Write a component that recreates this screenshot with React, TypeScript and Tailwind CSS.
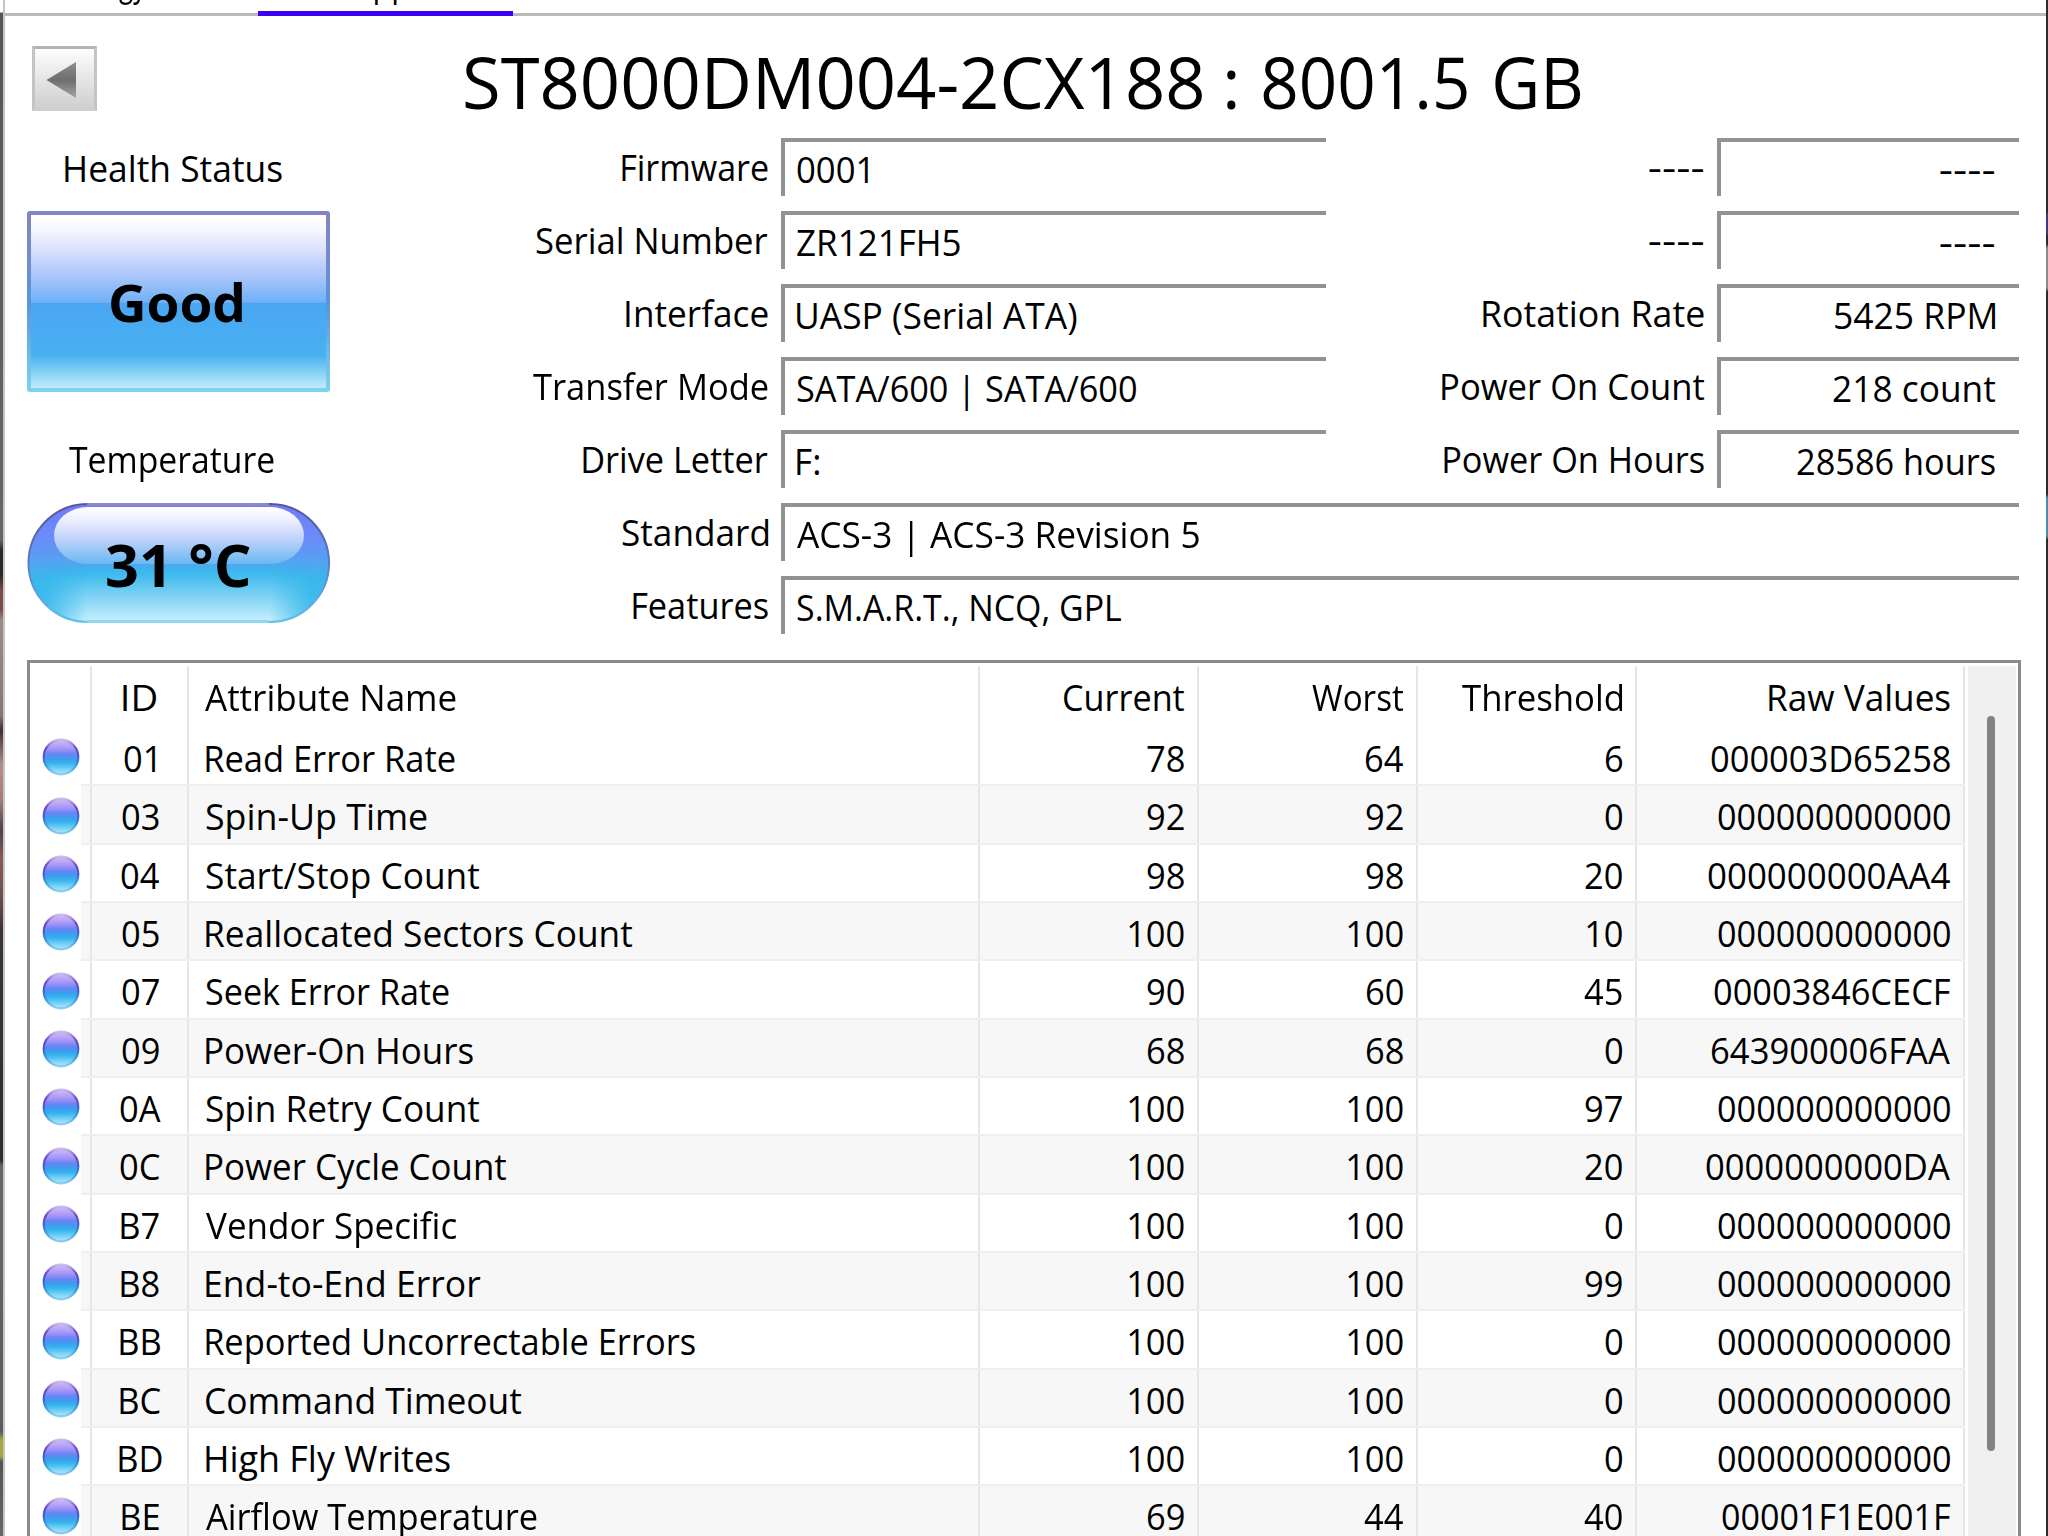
import type { ReactNode } from 'react';

const FONT = '"Open Sans", "Noto Sans", sans-serif';

interface TextProps {
  children: string;
  size?: number;
  weight?: number;
  width?: number;
}

interface Field {
  label: string;
  labelWidth: number;
  value: string;
  valueWidth: number;
}

interface Attribute {
  id: string;
  name: string;
  nameWidth: number;
  current: string;
  worst: string;
  threshold: string;
  raw: string;
  rawWidth: number;
}

const fields: Field[] = [
  { label: 'Firmware', labelWidth: 146, value: '0001', valueWidth: 71 },
  { label: 'Serial Number', labelWidth: 232, value: 'ZR121FH5', valueWidth: 163 },
  { label: 'Interface', labelWidth: 142, value: 'UASP (Serial ATA)', valueWidth: 280 },
  { label: 'Transfer Mode', labelWidth: 235, value: 'SATA/600 | SATA/600', valueWidth: 339 },
  { label: 'Drive Letter', labelWidth: 185, value: 'F:', valueWidth: 22 },
  { label: 'Standard', labelWidth: 146, value: 'ACS-3 | ACS-3 Revision 5', valueWidth: 402 },
  { label: 'Features', labelWidth: 135, value: 'S.M.A.R.T., NCQ, GPL', valueWidth: 324 }
];

const counters: Field[] = [
  { label: '----', labelWidth: 55, value: '----', valueWidth: 55 },
  { label: '----', labelWidth: 55, value: '----', valueWidth: 55 },
  { label: 'Rotation Rate', labelWidth: 221, value: '5425 RPM', valueWidth: 160 },
  { label: 'Power On Count', labelWidth: 262, value: '218 count', valueWidth: 162 },
  { label: 'Power On Hours', labelWidth: 260, value: '28586 hours', valueWidth: 198 }
];

const attributes: Attribute[] = [
  { id: '01', name: 'Read Error Rate', nameWidth: 249, current: '78', worst: '64', threshold: '6', raw: '000003D65258', rawWidth: 239 },
  { id: '03', name: 'Spin-Up Time', nameWidth: 221, current: '92', worst: '92', threshold: '0', raw: '000000000000', rawWidth: 232 },
  { id: '04', name: 'Start/Stop Count', nameWidth: 273, current: '98', worst: '98', threshold: '20', raw: '000000000AA4', rawWidth: 242 },
  { id: '05', name: 'Reallocated Sectors Count', nameWidth: 426, current: '100', worst: '100', threshold: '10', raw: '000000000000', rawWidth: 232 },
  { id: '07', name: 'Seek Error Rate', nameWidth: 243, current: '90', worst: '60', threshold: '45', raw: '00003846CECF', rawWidth: 236 },
  { id: '09', name: 'Power-On Hours', nameWidth: 267, current: '68', worst: '68', threshold: '0', raw: '643900006FAA', rawWidth: 238 },
  { id: '0A', name: 'Spin Retry Count', nameWidth: 273, current: '100', worst: '100', threshold: '97', raw: '000000000000', rawWidth: 232 },
  { id: '0C', name: 'Power Cycle Count', nameWidth: 300, current: '100', worst: '100', threshold: '20', raw: '0000000000DA', rawWidth: 244 },
  { id: 'B7', name: 'Vendor Specific', nameWidth: 251, current: '100', worst: '100', threshold: '0', raw: '000000000000', rawWidth: 232 },
  { id: 'B8', name: 'End-to-End Error', nameWidth: 275, current: '100', worst: '100', threshold: '99', raw: '000000000000', rawWidth: 232 },
  { id: 'BB', name: 'Reported Uncorrectable Errors', nameWidth: 489, current: '100', worst: '100', threshold: '0', raw: '000000000000', rawWidth: 232 },
  { id: 'BC', name: 'Command Timeout', nameWidth: 315, current: '100', worst: '100', threshold: '0', raw: '000000000000', rawWidth: 232 },
  { id: 'BD', name: 'High Fly Writes', nameWidth: 244, current: '100', worst: '100', threshold: '0', raw: '000000000000', rawWidth: 232 },
  { id: 'BE', name: 'Airflow Temperature', nameWidth: 331, current: '69', worst: '44', threshold: '40', raw: '00001F1E001F', rawWidth: 228 }
];

const headings = [
  { label: 'Current', width: 120 },
  { label: 'Worst', width: 91 },
  { label: 'Threshold', width: 160 },
  { label: 'Raw Values', width: 181 }
];

const columns = 'grid grid-cols-[62px_97px_791px_219px_219px_219px_328px]';

const context = document.createElement('canvas').getContext('2d')!;

// Squeezes a string so that its visible glyphs are exactly `width` wide
function Text({ children, size = 36, weight = 400, width }: TextProps) {
  context.font = `${weight} ${size}px ${FONT}`;
  const metrics = context.measureText(children);
  const ink = metrics.actualBoundingBoxLeft + metrics.actualBoundingBoxRight;
  const target = width ?? ink * 0.957;
  const scale = target / ink;
  return (
    <span
      className="block shrink-0 whitespace-pre text-left"
      style={{ width: target, fontFamily: FONT, fontSize: size, fontWeight: weight }}
    >
      <span
        className="inline-block origin-left"
        style={{ transform: `scaleX(${scale}) translateX(${metrics.actualBoundingBoxLeft}px)` }}
      >
        {children}
      </span>
    </span>
  );
}

function Orb() {
  return (
    <svg width="38" height="38" viewBox="0 0 38 38">
      <defs>
        <linearGradient id="orbFill" x1="0" y1="0" x2="0" y2="1">
          <stop offset="0" stopColor="#d3bcf6" />
          <stop offset="0.25" stopColor="#a796f6" />
          <stop offset="0.42" stopColor="#6784f4" />
          <stop offset="0.55" stopColor="#3d9cee" />
          <stop offset="0.68" stopColor="#34b4ee" />
          <stop offset="0.84" stopColor="#74d0f6" />
          <stop offset="1" stopColor="#b4e8fa" />
        </linearGradient>
        <linearGradient id="orbEdge" x1="0" y1="0" x2="0" y2="1">
          <stop offset="0" stopColor="#cbbce8" />
          <stop offset="0.25" stopColor="#6a48cc" />
          <stop offset="0.5" stopColor="#4a5cd0" />
          <stop offset="0.75" stopColor="#3a9cdc" />
          <stop offset="1" stopColor="#8ccdf0" />
        </linearGradient>
      </defs>
      <circle cx="19" cy="19" r="17.3" fill="url(#orbFill)" stroke="url(#orbEdge)" strokeWidth="2.2" />
    </svg>
  );
}

function TemperaturePill() {
  return (
    <svg width="303" height="120" viewBox="0 0 303 120" className="col-start-1 row-start-1">
      <defs>
        <linearGradient id="pillFill" x1="0" y1="0" x2="0" y2="1">
          <stop offset="0" stopColor="#6f7bfa" />
          <stop offset="0.3" stopColor="#6b8df8" />
          <stop offset="0.5" stopColor="#52a4f0" />
          <stop offset="0.62" stopColor="#39b7ec" />
          <stop offset="1" stopColor="#45c0ee" />
        </linearGradient>
        <linearGradient id="pillGlow" x1="0" y1="0" x2="0" y2="1">
          <stop offset="0.5" stopColor="#36b6ec" stopOpacity="0" />
          <stop offset="0.6" stopColor="#40baed" />
          <stop offset="1" stopColor="#c6eefb" />
        </linearGradient>
        <linearGradient id="pillFade" x1="0" y1="0" x2="1" y2="0">
          <stop offset="0.06" stopColor="#000" />
          <stop offset="0.2" stopColor="#fff" />
          <stop offset="0.8" stopColor="#fff" />
          <stop offset="0.94" stopColor="#000" />
        </linearGradient>
        <linearGradient id="pillShine" x1="0" y1="0" x2="0" y2="1">
          <stop offset="0" stopColor="#fff" />
          <stop offset="0.2" stopColor="#f0f0ff" />
          <stop offset="0.55" stopColor="#c3d3fb" />
          <stop offset="1" stopColor="#68b8f2" />
        </linearGradient>
        <linearGradient id="pillEdge" x1="0" y1="0" x2="0" y2="1">
          <stop offset="0" stopColor="#5a529c" />
          <stop offset="0.5" stopColor="#5a78c8" />
          <stop offset="1" stopColor="#62c4ea" />
        </linearGradient>
        <mask id="pillMask">
          <rect width="303" height="120" fill="url(#pillFade)" />
        </mask>
      </defs>
      <rect x="1.5" y="1" width="301" height="118" rx="59" fill="url(#pillFill)" />
      <rect x="2.5" y="2" width="299" height="116" rx="58" fill="url(#pillGlow)" mask="url(#pillMask)" />
      <rect x="27" y="4" width="250" height="57" rx="34" ry="28.5" fill="url(#pillShine)" />
      <rect x="1.5" y="1" width="300.5" height="118" rx="59" fill="none" stroke="url(#pillEdge)" strokeWidth="2" />
      <path d="M60 1.5H242" stroke="#8d88c4" strokeWidth="3" />
      <path d="M60 118.5H242" stroke="#8fd6f2" strokeWidth="3" />
    </svg>
  );
}

function FieldLabel({ children }: { children: ReactNode }) {
  return <div className="flex h-[58px] flex-1 items-center justify-end pt-[2px] pr-[13px] leading-[58px]">{children}</div>;
}

function Separator() {
  return <div className="w-[2px] shrink-0 bg-[#e6e6e6]" />;
}

export default function App() {
  return (
    <div className="flex h-[1536px] w-[2048px] overflow-hidden bg-white text-black">
      <div className="w-[3px] shrink-0 bg-[linear-gradient(#fff_12px,#555_13px,#666_540px,#2c2828_550px,#2c2828_575px,#7a4a4a_590px,#7a4a4a_610px,#9a8c88_620px,#857874_715px,#3c3030_730px,#b58c8c_765px,#a87a7a_800px,#4a4444_830px,#8a5a5a_860px,#6a4c4c_900px,#3c3434_930px,#302c2c_1160px,#666_1166px,#5c5c5c_1432px,#a8a83c_1440px,#a8a83c_1456px,#555_1462px,#666_1536px)]" />
      <div className="w-[2px] shrink-0 bg-[#c4c4c4]" />

      <div className="flex min-w-0 flex-1 flex-col">
        {/* Drive tabs, only the bottom edge is in view */}
        <div className="flex h-[16px] shrink-0 border-b-[3px] border-[#bbb]">
          <div className="flex h-[16px] w-[253px] justify-center overflow-hidden pl-[3px] leading-[44px]">
            <div className="-mt-[39px]"><Text width={28}>gy</Text></div>
          </div>
          <div className="flex h-[16px] w-[255px] justify-center overflow-hidden border-b-[5px] border-[#3b00f0] pl-[12px] leading-[44px]">
            <div className="-mt-[39px]"><Text width={34}>pp</Text></div>
          </div>
        </div>

        <div className="flex h-[122px] shrink-0">
          <div className="flex w-[92px] justify-end pt-[30px]">
            <button className="flex h-[65px] w-[65px] items-center justify-center border-[3px] border-t-[#b4b4b4] border-r-[#c4c4c4] border-b-[#cfcfcf] border-l-[#c4c4c4] bg-linear-to-b from-[#fdfdfd] via-[#e6e6e6] to-[#cfcfcf] pt-[3px] pr-[6px]">
              <svg width="32" height="38" viewBox="0 0 32 38">
                <defs>
                  <linearGradient id="arrow" x1="0" y1="0" x2="0" y2="1">
                    <stop offset="0" stopColor="#8c8c8c" />
                    <stop offset="0.5" stopColor="#6e6e6e" />
                    <stop offset="1" stopColor="#a4a4a4" />
                  </linearGradient>
                </defs>
                <path d="M0.5 19L30 1V37Z" fill="url(#arrow)" />
              </svg>
            </button>
          </div>
          <h1 className="flex flex-1 pt-[12px] pl-[368px] leading-[108px]">
            <Text size={71} width={737}>ST8000DM004-2CX188</Text>
            <span className="pl-[25px]"><Text size={71} width={9}>:</Text></span>
            <span className="pl-[27px]"><Text size={71} width={204}>8001.5</Text></span>
            <span className="pl-[28px]"><Text size={71} width={86}>GB</Text></span>
          </h1>
        </div>

        <div className="flex h-[522px] shrink-0">
          <div className="w-[335px] pl-[22px]">
            <div className="flex h-[73px] pt-[4px] pl-[38px] leading-[54px]">
              <Text width={217}>Health Status</Text>
            </div>
            <div className="flex h-[181px] w-[303px] items-center justify-center rounded-[3px] bg-linear-to-b from-[#8584c2] via-[#5a94da] to-[#7dd3f0] p-[4px]">
              <div className="flex h-full w-full items-center justify-center bg-[linear-gradient(#fff_0%,#f8f8ff_8%,#dbe0fd_20%,#a9c4fa_36%,#6fb1f7_50.5%,#4ba6f2_51%,#47b1f0_81%,#7fcff4_90%,#c3ebfa_100%)] pr-[4px] leading-[60px]">
                <Text size={52} weight={700} width={131}>Good</Text>
              </div>
            </div>
            <div className="flex h-[111px] pt-[39px] pl-[42px] leading-[58px]">
              <Text width={205}>Temperature</Text>
            </div>
            <div className="grid h-[120px] w-[303px] place-items-center leading-[70px]">
              <TemperaturePill />
              <div className="z-10 col-start-1 row-start-1 pt-[2px]">
                <Text size={59} weight={700} width={143}>31 °C</Text>
              </div>
            </div>
          </div>

          <div className="flex flex-col">
            {fields.map((field, i) => (
              <div key={field.label} className="flex h-[73px]">
                <div className="flex w-[441px]">
                  <FieldLabel><Text width={field.labelWidth}>{field.label}</Text></FieldLabel>
                </div>
                <div className={`flex h-[58px] items-center border-t-4 border-l-4 border-[#929292] pt-[2px] pl-[12px] leading-[54px] ${i < 5 ? 'w-[545px]' : 'w-[1238px]'}`}>
                  <Text width={field.valueWidth}>{field.value}</Text>
                </div>
                {counters[i] && (
                  <>
                    <div className="flex w-[391px]">
                      <FieldLabel><Text width={counters[i].labelWidth}>{counters[i].label}</Text></FieldLabel>
                    </div>
                    <div className="flex h-[58px] w-[302px] items-center justify-end border-t-4 border-l-4 border-[#929292] pt-[2px] pr-[24px] leading-[54px]">
                      <Text width={counters[i].valueWidth}>{counters[i].value}</Text>
                    </div>
                  </>
                )}
              </div>
            ))}
          </div>
        </div>

        {/* S.M.A.R.T. attribute list */}
        <div className="ml-[22px] flex min-h-0 w-[1994px] flex-1 border-x-[3px] border-t-[3px] border-[#868c92]">
          <div className="w-[1938px] shrink-0 overflow-hidden">
            <div className={`${columns} h-[65px] grid-rows-[62px] pt-[3px] leading-[64px]`}>
              <div className="flex justify-end"><Separator /></div>
              <div className="flex">
                <div className="flex flex-1 justify-center pr-[1px]"><Text width={33}>ID</Text></div>
                <Separator />
              </div>
              <div className="flex justify-between">
                <div className="pl-[16px]"><Text width={251}>Attribute Name</Text></div>
                <Separator />
              </div>
              {headings.map(heading => (
                <div key={heading.label} className="flex justify-end">
                  <div className="pr-[13px]"><Text width={heading.width}>{heading.label}</Text></div>
                  <Separator />
                </div>
              ))}
            </div>

            {attributes.map((row, i) => (
              <div key={row.id} className={`${columns} h-[58.35px] grid-rows-[58.35px] leading-[61px]`}>
                <div className="flex">
                  <div className="flex w-[51px] items-center pl-[12px]"><Orb /></div>
                  <div className={`flex flex-1 justify-end border-b-2 border-[#efefef] ${i % 2 ? 'bg-[#f7f7f7]' : ''}`}>
                    <Separator />
                  </div>
                </div>
                <div className={`flex border-b-2 border-[#efefef] ${i % 2 ? 'bg-[#f7f7f7]' : ''}`}>
                  <div className="flex flex-1 justify-center pl-[1px]"><Text>{row.id}</Text></div>
                  <Separator />
                </div>
                <div className={`flex justify-between border-b-2 border-[#efefef] ${i % 2 ? 'bg-[#f7f7f7]' : ''}`}>
                  <div className="pl-[17px]"><Text width={row.nameWidth}>{row.name}</Text></div>
                  <Separator />
                </div>
                {[row.current, row.worst, row.threshold].map((value, n) => (
                  <div key={n} className={`flex justify-end border-b-2 border-[#efefef] ${i % 2 ? 'bg-[#f7f7f7]' : ''}`}>
                    <div className="pr-[13px]"><Text>{value}</Text></div>
                    <Separator />
                  </div>
                ))}
                <div className={`flex justify-end border-b-2 border-[#efefef] ${i % 2 ? 'bg-[#f7f7f7]' : ''}`}>
                  <div className="pr-[13px]"><Text width={row.rawWidth}>{row.raw}</Text></div>
                  <Separator />
                </div>
              </div>
            ))}
          </div>
          <div className="mt-[3px] flex w-[48px] justify-center bg-[#f0f0f0] pt-[50px] pr-[3px]">
            <div className="h-[735px] w-[8px] rounded-full bg-[#838383]" />
          </div>
        </div>
      </div>

      <div className="w-[2px] shrink-0 bg-[linear-gradient(#2b2b2b_212px,#3c3c7c_214px,#3c3c7c_234px,#2b2b2b_236px,#2b2b2b_244px,#8a8a8a_248px,#8a8a8a_288px,#2b2b2b_292px,#2b2b2b_494px,#4c8ca6_498px,#4c8ca6_536px,#2b2b2b_540px)]" />
    </div>
  );
}
